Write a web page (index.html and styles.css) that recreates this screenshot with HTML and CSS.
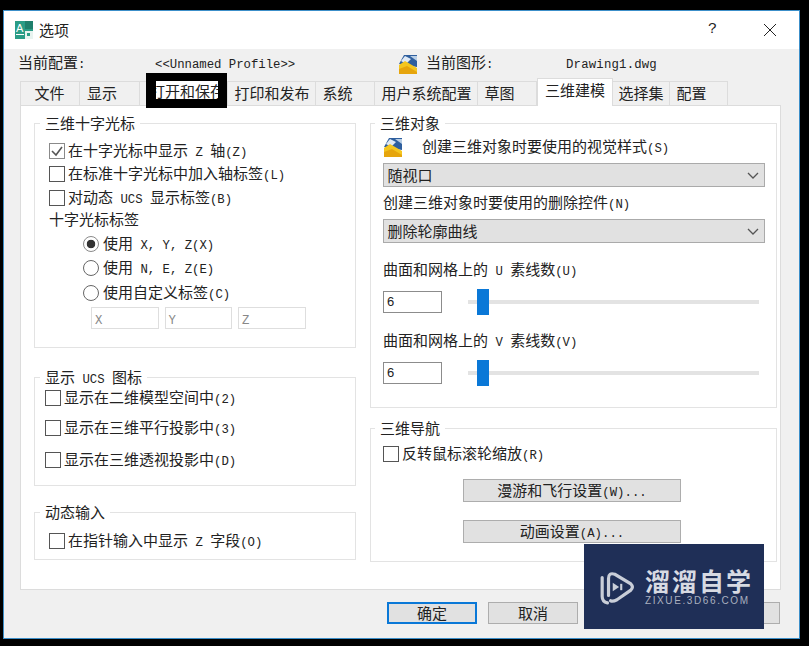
FILE: index.html
```html
<!DOCTYPE html>
<html lang="zh-CN">
<head>
  <meta charset="UTF-8">
  <title>选项</title>
  <link rel="stylesheet" href="styles.css">
</head>
<body>
  <svg class="defs" width="0" height="0">
    <symbol id="drawingIcon" viewBox="0 0 20 21">
      <path d="M1 10 L6 1 H19 V13 Z" fill="#2f5f9e"/>
      <path d="M3 7 L7 2 L13 5 L8 10 Z" fill="#dfe9f5"/>
      <path d="M12 2 H19 V7 Z" fill="#b9cfe6"/>
      <path d="M1 11 L7 7 L19 14 V20 H1 Z" fill="#f4c61f"/>
      <path d="M1 15 L9 12 L19 18 V20 H1 Z" fill="#e6a50d"/>
    </symbol>
  </svg>

  <div class="dialog">
    <div class="titlebar">
      <svg class="app-icon" width="18" height="18" viewBox="0 0 18 18">
        <rect width="18" height="18" fill="#2a9c86"/>
        <rect x="10" width="8" height="8" fill="#1f7f6c"/>
        <rect x="10" y="10" width="8" height="8" fill="#e8f3f0"/>
        <rect x="12" y="12" width="3" height="3" fill="#2a9c86"/>
        <text x="1" y="11" class="app-letter">A</text>
        <rect x="1" y="13" width="8" height="1" fill="#fff"/>
      </svg>
      <span class="title">选项</span>
      <span class="help">?</span>
      <svg class="close" width="14" height="14" viewBox="0 0 14 14">
        <path d="M1 1 L13 13 M13 1 L1 13" stroke="#222" fill="none"/>
      </svg>
    </div>

    <div class="content">
      <div class="profile">
        <div class="profile-name">当前配置<span class="lt">:</span></div>
        <div class="profile-value"><span class="lt">&lt;&lt;Unnamed Profile&gt;&gt;</span></div>
        <svg class="profile-icon" width="20" height="21"><use href="#drawingIcon"/></svg>
        <div class="drawing-name">当前图形<span class="lt">:</span></div>
        <div class="drawing-value"><span class="lt">Drawing1.dwg</span></div>
      </div>

      <div class="tabs">
        <div class="tab tab-file">文件</div>
        <div class="tab tab-show">显示</div>
        <div class="tab tab-open">
          <div class="redact"><div class="redact-text">打开和保存</div></div>
        </div>
        <div class="tab tab-print">打印和发布</div>
        <div class="tab tab-sys">系统</div>
        <div class="tab tab-user">用户系统配置</div>
        <div class="tab tab-draft">草图</div>
        <div class="tab tab-active">三维建模</div>
        <div class="tab tab-select">选择集</div>
        <div class="tab tab-config">配置</div>
      </div>

      <div class="panel">
        <div class="col-left">
          <fieldset class="group group-cross">
            <legend>三维十字光标</legend>
            <div class="row">
              <span class="check checked">
                <svg width="14" height="14" viewBox="0 0 14 14"><path d="M2 7 L6 11 L12 3" stroke="#555" stroke-width="1.6" fill="none"/></svg>
              </span>
              <span>在十字光标中显示<span class="lt"> Z </span>轴<span class="lt">(Z)</span></span>
            </div>
            <div class="row row-tight"><span class="check"></span><span>在标准十字光标中加入轴标签<span class="lt">(L)</span></span></div>
            <div class="row"><span class="check"></span><span>对动态<span class="lt"> UCS </span>显示标签<span class="lt">(B)</span></span></div>
            <div class="row row-tighter"><span>十字光标标签</span></div>
            <div class="row row-radio row-radio-first"><span class="radio on"></span><span>使用<span class="lt"> X, Y, Z(X)</span></span></div>
            <div class="row row-radio"><span class="radio"></span><span>使用<span class="lt"> N, E, Z(E)</span></span></div>
            <div class="row row-radio row-radio-last"><span class="radio"></span><span>使用自定义标签<span class="lt">(C)</span></span></div>
            <div class="axis-inputs">
              <div class="axis-input"><span class="lt">X</span></div>
              <div class="axis-input"><span class="lt">Y</span></div>
              <div class="axis-input"><span class="lt">Z</span></div>
            </div>
          </fieldset>

          <fieldset class="group group-ucs">
            <legend>显示<span class="lt"> UCS </span>图标</legend>
            <div class="row"><span class="check"></span><span>显示在二维模型空间中<span class="lt">(2)</span></span></div>
            <div class="row row-ucs2"><span class="check"></span><span>显示在三维平行投影中<span class="lt">(3)</span></span></div>
            <div class="row row-ucs3"><span class="check"></span><span>显示在三维透视投影中<span class="lt">(D)</span></span></div>
          </fieldset>

          <fieldset class="group group-input">
            <legend>动态输入</legend>
            <div class="row"><span class="check"></span><span>在指针输入中显示<span class="lt"> Z </span>字段<span class="lt">(O)</span></span></div>
          </fieldset>
        </div>

        <div class="col-right">
          <fieldset class="group group-objects">
            <legend>三维对象</legend>
            <div class="style-row">
              <svg width="20" height="21"><use href="#drawingIcon"/></svg>
              <span>创建三维对象时要使用的视觉样式<span class="lt">(S)</span></span>
            </div>
            <div class="select">
              <span>随视口</span>
              <svg width="12" height="7" viewBox="0 0 12 7"><path d="M1 1 L6 6 L11 1" stroke="#555" stroke-width="1.3" fill="none"/></svg>
            </div>
            <div class="field-label">创建三维对象时要使用的删除控件<span class="lt">(N)</span></div>
            <div class="select select-second">
              <span>删除轮廓曲线</span>
              <svg width="12" height="7" viewBox="0 0 12 7"><path d="M1 1 L6 6 L11 1" stroke="#555" stroke-width="1.3" fill="none"/></svg>
            </div>
            <div class="field-label label-u">曲面和网格上的<span class="lt"> U </span>素线数<span class="lt">(U)</span></div>
            <div class="slider-row">
              <div class="number">6</div>
              <div class="slider"><div class="thumb"></div></div>
            </div>
            <div class="field-label label-v">曲面和网格上的<span class="lt"> V </span>素线数<span class="lt">(V)</span></div>
            <div class="slider-row">
              <div class="number">6</div>
              <div class="slider"><div class="thumb"></div></div>
            </div>
          </fieldset>

          <fieldset class="group group-nav">
            <legend>三维导航</legend>
            <div class="row"><span class="check"></span><span>反转鼠标滚轮缩放<span class="lt">(R)</span></span></div>
            <button class="btn btn-nav">漫游和飞行设置<span class="lt">(W)...</span></button>
            <button class="btn btn-nav btn-anim">动画设置<span class="lt">(A)...</span></button>
          </fieldset>
        </div>
      </div>

      <div class="footer">
        <button class="btn btn-foot btn-default">确定</button>
        <button class="btn btn-foot">取消</button>
        <button class="btn btn-foot"></button>
        <button class="btn btn-foot"></button>
      </div>
    </div>

    <div class="watermark">
      <svg width="36" height="36" viewBox="0 0 34 34">
        <path d="M3 8 V26 Q3 31 8 32" stroke="#c9ced8" stroke-width="3" fill="none" stroke-linecap="round"/>
        <path d="M9 25 V9 Q9 3 15 5 L30 14 Q33 17 30 20 L17 29 Q13 31 11 30" stroke="#c9ced8" stroke-width="3" fill="none" stroke-linecap="round"/>
        <path d="M13 13 L19 17 L13 21 Z" fill="#c9ced8"/>
        <rect x="20" y="14" width="2" height="6" fill="#c9ced8"/>
      </svg>
      <div class="brand">
        <div class="brand-name">溜溜自学</div>
        <div class="brand-url">ZIXUE.3D66.COM</div>
      </div>
    </div>
  </div>
</body>
</html>
```

FILE: styles.css
```css
* {
  box-sizing: border-box;
}

body {
  margin: 0;
  padding: 10px 0 0 3px;
  height: 646px;
  overflow: hidden;
  background-color: black;
  color: #222;
  font-family: "Noto Sans CJK SC", "Liberation Sans", sans-serif;
  font-size: 15px;
  line-height: 20px;
}

.defs {
  display: block;
  height: 0;
}

.lt {
  font-family: "Liberation Mono", monospace;
  font-size: 12.3px;
  white-space: pre;
}

.dialog {
  position: relative;
  width: 797px;
  height: 629px;
  border: 1px solid #3c8fc9;
  background-color: #f0f0f0;
}

.titlebar {
  display: flex;
  align-items: center;
  height: 38px;
  padding-left: 11px;
  padding-bottom: 1px;
  background-color: white;
}

.app-letter {
  font-family: "Liberation Sans", sans-serif;
  font-size: 11px;
  fill: white;
}

.title {
  margin-left: 6px;
}

.help {
  margin-left: auto;
  margin-right: 46px;
  font-family: "Liberation Mono", monospace;
  font-size: 15px;
}

.close {
  margin-right: 22px;
}

.content {
  padding: 0 18px 0 16px;
}

.profile {
  display: flex;
  align-items: center;
  height: 32px;
  margin-left: -2px;
  padding-bottom: 4px;
}

.profile-name {
  width: 137px;
}

.profile-value {
  width: 243px;
}

.profile-icon {
  margin-top: 3px;
}

.drawing-name {
  width: 140px;
  margin-left: 8px;
}

.drawing-value {
  letter-spacing: 0.2px;
}

.tabs {
  display: flex;
  align-items: flex-end;
  height: 24px;
}

.tab {
  height: 24px;
  border: 1px solid #dcdcdc;
  border-bottom: none;
  border-left: none;
  text-align: center;
  line-height: 21px;
}

.tab-file { width: 60px; padding-right: 1px; border-left: 1px solid #dcdcdc; }
.tab-show { width: 60px; padding-right: 15px; }
.tab-open { width: 88px; position: relative; }
.tab-print { width: 88px; padding-left: 1px; }
.tab-sys { width: 59px; padding-right: 15px; }
.tab-user { width: 103px; padding-left: 1px; }
.tab-draft { width: 59px; padding-right: 15px; }
.tab-select { width: 57px; }
.tab-config { width: 58px; padding-right: 14px; }

.tab-active {
  position: relative;
  z-index: 1;
  width: 76px;
  height: 28px;
  margin-bottom: -1px;
  background-color: white;
  border-left: 1px solid #dcdcdc;
  line-height: 21px;
}

/* black box painted over the tab in the screenshot */
.redact {
  position: absolute;
  left: 6px;
  top: -9px;
  width: 81px;
  height: 35px;
  padding: 8px 9px 9px 10px;
  background-color: black;
}

.redact-text {
  width: 62px;
  height: 18px;
  overflow: hidden;
  white-space: nowrap;
  text-align: left;
  text-indent: -6px;
  background-color: white;
  color: #222;
  font-size: 15px;
  line-height: 19px;
}

.panel {
  display: flex;
  gap: 14px;
  height: 485px;
  padding: 7px 0 0 13px;
  border: 1px solid #dcdcdc;
  background-color: white;
}

.col-left {
  width: 322px;
}

.col-right {
  width: 407px;
}

.group {
  margin: 0;
  padding: 0;
  border: 1px solid #e3e3e3;
  border-width: 1.5px;
}

.group legend {
  margin-left: 5px;
  padding: 0 5px;
  height: 20px;
  line-height: 20px;
}

.row {
  display: flex;
  align-items: center;
  height: 24px;
  padding-left: 14px;
  white-space: pre;
}

.row-tight { margin-top: -1px; }
.row-tighter { margin-top: -3px; }
.row-radio { padding-left: 48px; }
.row-radio-first, .row-radio-last { margin-top: 1px; }

.check {
  display: flex;
  align-items: center;
  justify-content: center;
  flex: none;
  width: 16px;
  height: 16px;
  margin-right: 3px;
  border: 1.5px solid #555;
  background-color: white;
}

.check.checked {
  border-color: #8a8a8a;
}

.radio {
  flex: none;
  width: 16px;
  height: 16px;
  margin-right: 4px;
  border: 1.5px solid #666;
  border-radius: 50%;
  background-color: white;
}

.radio.on {
  border-color: #8a8a8a;
  background: radial-gradient(circle, #333 0 4px, white 4.6px);
}

.group-cross {
  height: 235px;
}

.group-cross .row:first-of-type {
  margin-top: 6px;
}

.axis-inputs {
  display: flex;
  gap: 6px;
  margin-top: 2px;
  padding-left: 56px;
}

.axis-input {
  width: 67.5px;
  height: 22px;
  padding-left: 3px;
  border: 1.5px solid #dedede;
  color: #888;
  line-height: 19px;
}

.group-ucs {
  height: 119px;
  margin-top: 19px;
}

.group-ucs .row {
  padding-left: 10px;
}

.group-ucs .row:first-of-type {
  margin-top: -1px;
}

.row-ucs2 { margin-top: 6px; }
.row-ucs3 { margin-top: 8px; }

.group-input {
  height: 58px;
  margin-top: 16px;
}

.group-input .row {
  margin-top: 7px;
}

.group-objects {
  height: 295px;
  margin-bottom: 10px;
  padding-left: 12px;
}

.group-objects legend {
  margin-left: -8px;
}

.style-row {
  display: flex;
  align-items: center;
  gap: 19px;
  height: 22px;
  margin-top: 3px;
}

.select {
  display: flex;
  align-items: center;
  justify-content: space-between;
  width: 382px;
  height: 24px;
  margin-top: 5px;
  padding: 0 5px 0 3.5px;
  border: 1.5px solid #aaa;
  background-color: #e1e1e1;
  line-height: 20px;
}

.select-second {
  margin-top: 7px;
}

.field-label {
  height: 20px;
  margin-top: 5px;
}

.label-u { margin-top: 16px; }
.label-v { margin-top: 17px; }

.slider-row {
  display: flex;
  align-items: center;
  gap: 26px;
  margin-top: 12px;
  height: 22px;
}

.number {
  width: 59px;
  height: 22px;
  padding-left: 3px;
  border: 1.5px solid #8c8c8c;
  font-family: "Liberation Sans", sans-serif;
  font-size: 13px;
  line-height: 19px;
}

.slider {
  position: relative;
  width: 291px;
  height: 4px;
  background-color: #e3e3e3;
}

.thumb {
  position: absolute;
  left: 9px;
  top: -11px;
  width: 12px;
  height: 26px;
  background-color: #0a78d7;
}

.group-nav {
  height: 144px;
}

.group-nav legend {
  margin-left: 4px;
}

.group-nav .row {
  margin-top: 4px;
  padding-left: 12px;
}

.btn {
  display: block;
  border: 1.5px solid #adadad;
  background-color: #e1e1e1;
  color: #222;
  font-family: inherit;
  font-size: 15px;
  padding: 0;
}

.btn-nav {
  width: 218px;
  height: 23px;
  margin: 13px 0 0 92px;
  line-height: 19px;
}

.btn-anim {
  margin-top: 18px;
}

.footer {
  display: flex;
  justify-content: flex-end;
  gap: 11px;
  padding-top: 12px;
  padding-right: 1px;
}

.btn-foot {
  width: 90px;
  height: 22px;
  line-height: 18px;
}

.btn-default {
  border: 2px solid #0a78d7;
}

.watermark {
  position: absolute;
  left: 580px;
  top: 533px;
  display: flex;
  align-items: center;
  gap: 10px;
  width: 180px;
  height: 85px;
  padding-left: 15px;
  background-color: #1f2f57;
  color: #d7dae2;
}

.brand-name {
  font-size: 25px;
  font-weight: 700;
  line-height: 26px;
  margin-bottom: 2px;
  letter-spacing: 2px;
  white-space: nowrap;
}

.brand-url {
  font-family: "Liberation Sans", sans-serif;
  font-size: 10px;
  line-height: 12px;
  letter-spacing: 1.6px;
  color: #aab0bf;
  white-space: nowrap;
}
```
